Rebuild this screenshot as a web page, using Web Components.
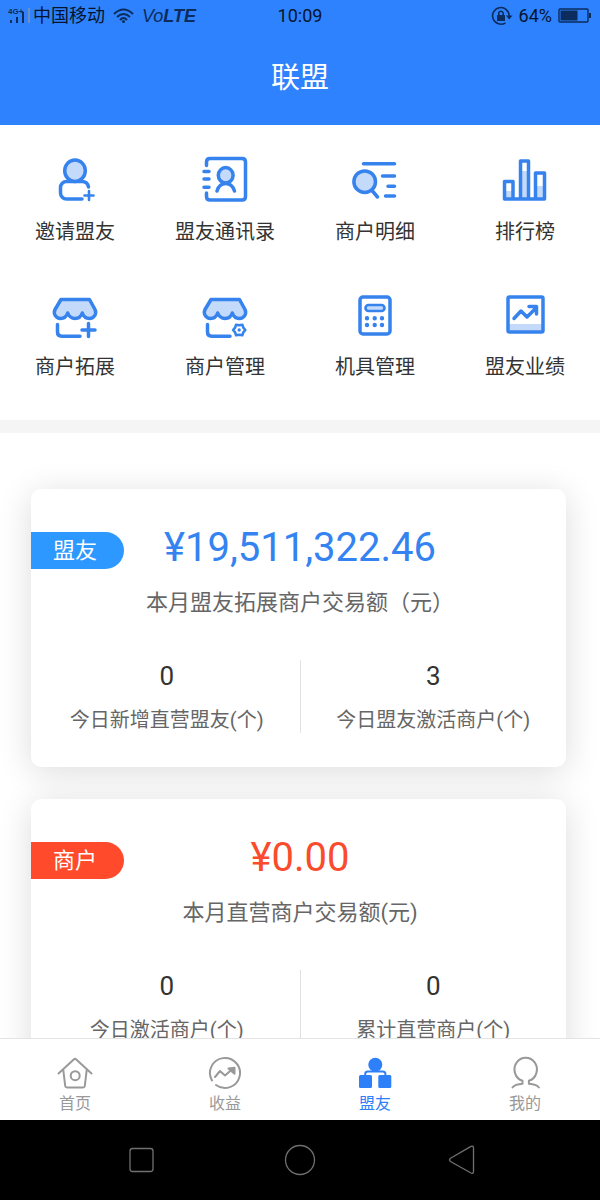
<!DOCTYPE html>
<html lang="zh-CN">
<head>
<meta charset="UTF-8">
<meta name="viewport" content="width=device-width, initial-scale=1">
<title>联盟</title>
<style>
  html, body {
    margin: 0;
    height: 100%;
  }
  body {
    font-family: Roboto, "Noto Sans CJK SC", sans-serif;
    background-color: #fff;
    color: #333;
  }
</style>
</head>
<body>
<alliance-app></alliance-app>

<script>
// Status bar of the phone
class StatusBar extends HTMLElement {
  constructor() {
    super();
    this.attachShadow({ mode: "open" });
    this.shadowRoot.innerHTML = `
      <style>
        :host {
          display: grid;
          grid-template-columns: 1fr auto 1fr;
          align-items: center;
          height: 32px;
          padding: 0 8px;
          color: #06152e;
          font-size: 18px;
          line-height: 32px;
        }
        .left, .right {
          display: flex;
          align-items: center;
          gap: 8px;
        }
        .carrier {
          display: flex;
          align-items: center;
        }
        .right {
          justify-content: flex-end;
          gap: 6px;
        }
        .volte {
          font-family: "Liberation Sans", sans-serif;
          font-style: italic;
          font-size: 18px;
          color: #0b2c5c;
        }
        svg {
          display: block;
        }
      </style>
      <div class="left">
        <div class="carrier">
          <svg width="25" height="20" viewBox="0 0 25 20" fill="#0b2c5c">
            <text x="0" y="8" font-family="Liberation Sans" font-size="8" font-weight="bold">4G+</text>
            <rect x="2" y="14" width="2" height="3"/>
            <rect x="8" y="11" width="2" height="6"/>
            <rect x="14" y="6" width="2" height="11"/>
            <rect x="20" y="2" width="2" height="15" fill="#6f8fc4"/>
          </svg>
          <span>中国移动</span>
        </div>
        <svg width="21" height="16" viewBox="0 0 21 16" fill="none" stroke="#0b2c5c" stroke-width="2">
          <path d="M1 6Q10.500 -3 20 6M4 9Q10.500 3 17 9M7 12Q10.500 8 14 12"/>
          <circle cx="10.500" cy="13.500" r="1.500" fill="#0b2c5c" stroke="none"/>
        </svg>
        <span class="volte">Vo<b>LTE</b></span>
      </div>
      <span>10:09</span>
      <div class="right">
        <svg width="22" height="20" viewBox="0 0 22 20" fill="none" stroke="#0b2c5c" stroke-width="1.600">
          <path d="M14.500 16.800A8.300 8.300 0 1 1 18.200 10"/>
          <path d="M15 9.500h6.500L18.200 13.500z" fill="#0b2c5c" stroke="none"/>
          <rect x="6" y="9" width="8" height="6" rx="0.500" fill="#0b2c5c" stroke="none"/>
          <path d="M7.800 9V7.500a2.200 2.200 0 0 1 4.400 0V9"/>
        </svg>
        <span>64%</span>
        <svg width="34" height="16" viewBox="0 0 34 16">
          <rect x="1" y="1" width="29" height="13" rx="1" fill="none" stroke="#0b2c5c" stroke-width="1.400"/>
          <rect x="2.500" y="2.500" width="17" height="10" fill="#0b2c5c"/>
          <rect x="31" y="5" width="2" height="5" fill="#0b2c5c"/>
        </svg>
      </div>
    `;
  }
}
customElements.define("status-bar", StatusBar);

// Page title
class TitleBar extends HTMLElement {
  constructor() {
    super();
    this.attachShadow({ mode: "open" });
    this.shadowRoot.innerHTML = `
      <style>
        :host {
          display: block;
          padding-bottom: 1px;
        }
        h1 {
          margin: 0;
          font-size: 29px;
          font-weight: 400;
          line-height: 92px;
          text-align: center;
          color: #fff;
        }
      </style>
      <h1><slot></slot></h1>
    `;
  }
}
customElements.define("title-bar", TitleBar);

// One shortcut: icon in the "icon" slot, label in the default slot
class MenuItem extends HTMLElement {
  constructor() {
    super();
    this.attachShadow({ mode: "open" });
    this.shadowRoot.innerHTML = `
      <style>
        :host {
          display: block;
        }
        a {
          display: flex;
          flex-direction: column;
          align-items: center;
          gap: 16px;
          font-size: 20px;
          line-height: 24px;
          color: #333;
          text-decoration: none;
        }
        ::slotted(svg) {
          display: block;
          width: 48px;
          height: 48px;
          fill: none;
          stroke: #3683ee;
          stroke-width: 3.500px;
          stroke-linecap: round;
          stroke-linejoin: round;
        }
      </style>
      <a href="#"><slot name="icon"></slot><span><slot></slot></span></a>
    `;
  }
}
customElements.define("menu-item", MenuItem);

class MenuGrid extends HTMLElement {
  constructor() {
    super();
    this.attachShadow({ mode: "open" });
    this.shadowRoot.innerHTML = `
      <style>
        :host {
          display: grid;
          grid-template-columns: repeat(4, 1fr);
          row-gap: 47px;
          padding: 31px 0 41px;
          border-bottom: 13px solid #f5f5f5;
        }
      </style>
      <slot></slot>
    `;
  }
}
customElements.define("menu-grid", MenuGrid);

// Number with a caption
class StatItem extends HTMLElement {
  constructor() {
    super();
    this.attachShadow({ mode: "open" });
    this.shadowRoot.innerHTML = `
      <style>
        :host {
          display: flex;
          flex-direction: column;
          gap: 15px;
          flex: 1;
          text-align: center;
        }
        :host(:first-of-type) {
          border-right: 1px solid #e2e2e2;
        }
        .value {
          font-size: 26px;
          line-height: 32px;
          color: #333;
        }
        .label {
          font-size: 20px;
          line-height: 26px;
          color: #666;
        }
      </style>
      <span class="value"></span>
      <span class="label"><slot></slot></span>
    `;
    this.shadowRoot.querySelector(".value").textContent = this.getAttribute("value");
  }
}

// Card with the month's total and two stats
class SummaryCard extends HTMLElement {
  constructor() {
    super();
    this.attachShadow({ mode: "open" });
    this.shadowRoot.innerHTML = `
      <style>
        :host {
          display: block;
          position: relative;
          padding: 39px 0 34px 3px;
          border-radius: 10px;
          background-color: #fff;
          box-shadow: 0 5px 34px rgba(0, 0, 0, 0.14);
          text-align: center;
        }
        .tag {
          position: absolute;
          top: 43px;
          left: 0;
          padding: 0 27px 0 22px;
          border-radius: 0 19px 19px 0;
          background-color: var(--tag-color);
          color: #fff;
          font-size: 22px;
          line-height: 37px;
        }
        .amount {
          font-size: 40px;
          line-height: 40px;
          color: var(--amount-color);
        }
        .caption {
          margin-top: 21px;
          font-size: 22px;
          line-height: 28px;
          color: #666;
        }
        .stats {
          display: flex;
          margin-top: 43px;
        }
      </style>
      <div class="tag"></div>
      <div class="amount"></div>
      <div class="caption"></div>
      <div class="stats"><slot></slot></div>
    `;
    for (const name of ["tag", "amount", "caption"]) {
      this.shadowRoot.querySelector("." + name).textContent = this.getAttribute(name);
    }
  }
}

// Bottom tab, "active" marks the current page
class TabItem extends HTMLElement {
  constructor() {
    super();
    this.attachShadow({ mode: "open" });
    this.shadowRoot.innerHTML = `
      <style>
        :host {
          display: block;
          flex: 1;
          color: #999;
        }
        :host([active]) {
          color: #2e80f8;
        }
        a {
          display: flex;
          flex-direction: column;
          align-items: center;
          gap: 3px;
          padding: 16px 0 6px;
          font-size: 16px;
          line-height: 20px;
          color: inherit;
          text-decoration: none;
        }
        ::slotted(svg) {
          display: block;
          width: 36px;
          height: 36px;
          fill: none;
          stroke: currentColor;
          stroke-width: 2px;
          stroke-linecap: round;
          stroke-linejoin: round;
        }
      </style>
      <a href="#"><slot name="icon"></slot><span><slot></slot></span></a>
    `;
  }
}
customElements.define("tab-item", TabItem);

class TabBar extends HTMLElement {
  constructor() {
    super();
    this.attachShadow({ mode: "open" });
    this.shadowRoot.innerHTML = `
      <style>
        :host {
          display: flex;
          border-top: 1px solid #e4e4e4;
          background-color: #fff;
        }
      </style>
      <slot></slot>
    `;
  }
}
customElements.define("tab-bar", TabBar);

// Android navigation keys
class SystemNav extends HTMLElement {
  constructor() {
    super();
    this.attachShadow({ mode: "open" });
    this.shadowRoot.innerHTML = `
      <style>
        :host {
          display: grid;
          grid-template-columns: repeat(3, 1fr);
          height: 80px;
          padding: 0 60px;
          background-color: #000;
        }
        button {
          display: flex;
          align-items: center;
          justify-content: center;
          padding: 0;
          border: none;
          background: none;
        }
        svg {
          width: 32px;
          height: 32px;
          fill: none;
          stroke: #707070;
          stroke-width: 1.300px;
          stroke-linejoin: round;
        }
      </style>
      <button type="button" aria-label="最近任务">
        <svg viewBox="0 0 32 32"><rect x="6" y="4.500" width="23" height="23" rx="2.500"/></svg>
      </button>
      <button type="button" aria-label="主屏幕">
        <svg viewBox="0 0 32 32"><circle cx="16" cy="16" r="14.500"/></svg>
      </button>
      <button type="button" aria-label="返回">
        <svg viewBox="0 0 32 32"><path d="M6.500 14.200L27 2.400Q29.500 1.500 29.500 4V27.500Q29.500 30 27 29L6.500 17.500Q4.500 16 6.500 14.200z"/></svg>
      </button>
    `;
  }
}
customElements.define("system-nav", SystemNav);

class AllianceApp extends HTMLElement {
  constructor() {
    super();
    this.attachShadow({ mode: "open" });
    this.shadowRoot.innerHTML = `
      <style>
        :host {
          display: flex;
          flex-direction: column;
          height: 100vh;
        }
        header {
          background-color: #2f82fd;
        }
        header, menu-grid, tab-bar, system-nav {
          flex-shrink: 0;
        }
        main {
          display: flex;
          flex-direction: column;
          gap: 32px;
          flex: 1;
          min-height: 0;
          padding: 56px 34px 0 31px;
          overflow: hidden;
        }
        summary-card {
          flex-shrink: 0;
        }
        .ally {
          --tag-color: #2d98ff;
          --amount-color: #3483f0;
        }
        .merchant {
          --tag-color: #ff4a2b;
          --amount-color: #fa4c2c;
        }
      </style>
      <header>
        <status-bar></status-bar>
        <title-bar>联盟</title-bar>
      </header>
      <menu-grid>
        <menu-item>
          <svg slot="icon" viewBox="0 0 48 48">
            <path d="M37.500 31q-1-5.500-6.500-5.500H15.500a6 6 0 0 0-6 6v5.500a6 6 0 0 0 6 6H31"/>
            <ellipse cx="24" cy="14.700" rx="10.300" ry="10.700" fill="#c4dafa"/>
            <path d="M38 35v9M33.500 39.500h9" stroke-width="2.600"/>
          </svg>
          邀请盟友
        </menu-item>
        <menu-item>
          <svg slot="icon" viewBox="0 0 48 48">
            <path d="M5.500 9.500V6q0-3.500 3.500-3.500h32q3.500 0 3.500 3.500v34.500q0 3.500-3.500 3.500H9q-3.500 0-3.500-3.500V37"/>
            <path d="M3 15.500h5M3 23h5M3 31.300h5"/>
            <ellipse cx="24.700" cy="19.300" rx="7.400" ry="7.700" fill="#c4dafa"/>
            <path d="M16 35c1.500-5 4.500-7.500 8.700-7.500s7.200 2.500 8.800 7.500"/>
          </svg>
          盟友通讯录
        </menu-item>
        <menu-item>
          <svg slot="icon" viewBox="0 0 48 48">
            <circle cx="13.700" cy="25.700" r="10.800" fill="#c4dafa"/>
            <path d="M21 34.500l5.500 6.500M12.500 7.700h31M31.500 20h12M37 30.300h6.500M34.500 40h9"/>
          </svg>
          商户明细
        </menu-item>
        <menu-item>
          <svg slot="icon" viewBox="0 0 48 48">
            <path d="M3 35h9v8H3zM19 15h9v28h-9zM34 30h9v13h-9z" fill="#c4dafa" stroke="none"/>
            <path d="M3.500 43V25.500h8.500V43M19.500 43V5h8v38M34.500 43V17h9v26M3.500 43h40"/>
          </svg>
          排行榜
        </menu-item>
        <menu-item>
          <svg slot="icon" viewBox="0 0 48 48">
            <path d="M10 8.500h28.500L44 18.500c2 4.500-1 9-5.500 9-3.500 0-6-2-7.200-5.500-1.200 3.500-4 5.500-7.300 5.500s-6-2-7.300-5.500c-1.200 3.500-3.700 5.500-7.200 5.500-4.500 0-7.500-4.500-5.500-9z" fill="#c4dafa"/>
            <path d="M6.500 33.500V41q0 4.200 4.200 4.200H29M37.500 32.500v13M31 39h13"/>
          </svg>
          商户拓展
        </menu-item>
        <menu-item>
          <svg slot="icon" viewBox="0 0 48 48">
            <path d="M10 8.500h28.500L44 18.500c2 4.500-1 9-5.500 9-3.500 0-6-2-7.200-5.500-1.200 3.500-4 5.500-7.300 5.500s-6-2-7.300-5.500c-1.200 3.500-3.700 5.500-7.200 5.500-4.500 0-7.500-4.500-5.500-9z" fill="#c4dafa"/>
            <path d="M6.500 33.500V41q0 4.200 4.200 4.200H29"/>
            <path d="M44.300 39L42.300 41.400 41.300 44.300 38.200 43.700 35.100 44.300 34.100 41.400 32.100 39 34.100 36.600 35.100 33.700 38.200 34.300 41.300 33.700 42.300 36.600z" stroke-width="2.600"/>
            <circle cx="38.200" cy="39" r="1.700" fill="#3683ee" stroke="none"/>
          </svg>
          商户管理
        </menu-item>
        <menu-item>
          <svg slot="icon" viewBox="0 0 48 48">
            <rect x="9" y="6" width="30" height="37" rx="3"/>
            <rect x="14.500" y="14" width="19" height="6" rx="3" fill="#c4dafa" stroke-width="2.600"/>
            <path d="M16 27.300h.01M23.700 27.300h.01M31 27.300h.01M16 34h.01M23.700 34h.01M31 34h.01" stroke-width="4.400"/>
          </svg>
          机具管理
        </menu-item>
        <menu-item>
          <svg slot="icon" viewBox="0 0 48 48">
            <path d="M7 33h35v8H7z" fill="#c4dafa" stroke="none"/>
            <rect x="7" y="6" width="35" height="35" rx="1.500"/>
            <path d="M13 27.500l7-7.500 6 6 9-9M28 15.500h7.500V23"/>
          </svg>
          盟友业绩
        </menu-item>
      </menu-grid>
      <main>
        <summary-card class="ally" tag="盟友" amount="¥19,511,322.46" caption="本月盟友拓展商户交易额（元）">
          <stat-item value="0">今日新增直营盟友(个)</stat-item>
          <stat-item value="3">今日盟友激活商户(个)</stat-item>
        </summary-card>
        <summary-card class="merchant" tag="商户" amount="¥0.00" caption="本月直营商户交易额(元)">
          <stat-item value="0">今日激活商户(个)</stat-item>
          <stat-item value="0">累计直营商户(个)</stat-item>
        </summary-card>
      </main>
      <tab-bar>
        <tab-item>
          <svg slot="icon" viewBox="0 0 36 36">
            <path d="M1.500 18.500L17 4.300q1-.8 2 0L34.500 18.500M6.300 15l1.900 16q.2 1.600 1.800 1.600h16q1.600 0 1.800-1.600l1.900-16"/>
            <circle cx="18.200" cy="20.700" r="4.500"/>
          </svg>
          首页
        </tab-item>
        <tab-item>
          <svg slot="icon" viewBox="0 0 36 36">
            <path d="M5 25.500a15 15 0 1 1 4 4.500"/>
            <path d="M8 22l5-6 5 4.500 7-6"/>
            <path d="M21.500 13.500l6-.8v6z" fill="currentColor"/>
          </svg>
          收益
        </tab-item>
        <tab-item active>
          <svg slot="icon" viewBox="0 0 36 36">
            <g fill="currentColor" stroke="none">
              <circle cx="18.300" cy="9.800" r="7"/>
              <rect x="2" y="20" width="13" height="13" rx="1.500"/>
              <rect x="21.300" y="20" width="13" height="13" rx="1.500"/>
            </g>
            <path d="M8.200 21v-2q0-2.500 2.500-2.500h15.200q2.500 0 2.500 2.500v2"/>
          </svg>
          盟友
        </tab-item>
        <tab-item>
          <svg slot="icon" viewBox="0 0 36 36">
            <path d="M5.500 32.500q2.500-3.200 10-3.700v-3a11.200 11.800 0 1 1 6.400 0v3q7.500.5 10 3.700"/>
          </svg>
          我的
        </tab-item>
      </tab-bar>
      <system-nav></system-nav>
    `;
  }
}
customElements.define("stat-item", StatItem);
customElements.define("summary-card", SummaryCard);
customElements.define("alliance-app", AllianceApp);
</script>
</body>
</html>
